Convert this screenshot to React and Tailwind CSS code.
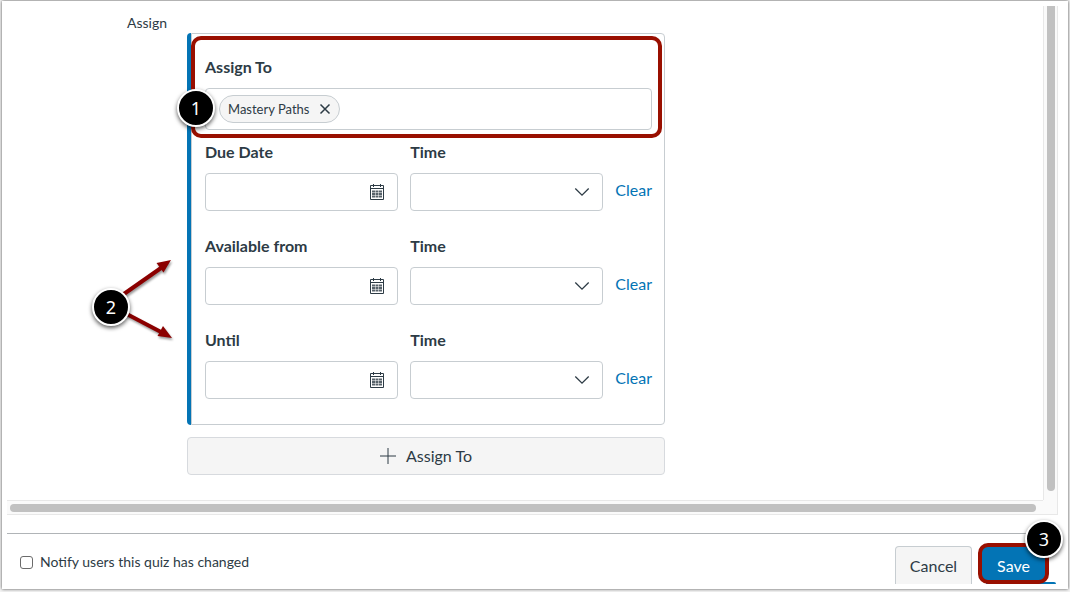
import { useState } from 'react'

const DATE_ROWS = [
  { id: 'due', label: 'Due Date' },
  { id: 'available', label: 'Available from' },
  { id: 'until', label: 'Until' },
]

function CalendarIcon() {
  return (
    <svg width="16" height="16" viewBox="0 0 16 16" fill="none" stroke="#2d3b45" aria-hidden="true">
      <path d="M1.5 1.500h13v14h-13z" />
      <path d="M2 4.500h12M4.500 0v3M11.500 0v3" />
      <path d="M3 7.500h3M6.500 7.500h3M10 7.500h3M3 10h3M6.500 10h3M10 10h3M3 12.500h3M6.500 12.500h3M10 12.500h3" strokeWidth="1.800" opacity=".8" />
    </svg>
  )
}

function ChevronIcon() {
  return (
    <svg
      width="16"
      height="16"
      viewBox="0 0 16 16"
      fill="none"
      stroke="#2d3b45"
      strokeWidth="1.3"
      className="pointer-events-none col-start-1 row-start-1 mr-3 self-center justify-self-end"
      aria-hidden="true"
    >
      <path d="M1.3 4.5 8 11.2l6.7-6.7" />
    </svg>
  )
}

function StepBadge({ number, className }) {
  return (
    <span
      className={`absolute z-10 flex size-[38px] items-center justify-center rounded-full border-2 border-white bg-black font-['Noto_Sans'] text-lg leading-6 text-white shadow-[0_2px_4px_rgba(0,0,0,0.65)] ${className}`}
    >
      {number}
    </span>
  )
}

function Arrows() {
  return (
    <svg
      width="64"
      height="96"
      viewBox="0 0 64 96"
      className="absolute top-[219px] -left-[72px] drop-shadow-[1px_2px_1px_rgba(0,0,0,0.4)]"
      aria-hidden="true"
    >
      <g stroke="#8b0000" strokeWidth="4" fill="none">
        <path d="M6 44 46 16" />
        <path d="M6 59 46 80" />
      </g>
      <path d="M56 8 48.5 20.5 41.5 11z" fill="#8b0000" />
      <path d="M57 86 42.5 84 48 74z" fill="#8b0000" />
    </svg>
  )
}

function DateRow({ id, label }) {
  const [date, setDate] = useState('')
  const [time, setTime] = useState('')

  return (
    <div className="mb-[23px] grid grid-cols-[minmax(0,1fr)_minmax(0,1fr)_auto] gap-x-3 last:mb-0">
      <label htmlFor={`${id}-date`} className="mb-[9px] font-bold">
        {label}
      </label>
      <label htmlFor={`${id}-time`} className="col-span-2 mb-[9px] font-bold">
        Time
      </label>
      <div className="flex h-[38px] items-center rounded border border-[#c7cdd1]">
        <input
          id={`${id}-date`}
          type="text"
          value={date}
          onChange={(e) => setDate(e.target.value)}
          className="h-full min-w-0 flex-1 px-3 outline-none"
        />
        <button type="button" className="mr-3 flex" aria-label={`Choose ${label}`}>
          <CalendarIcon />
        </button>
      </div>
      <div className="grid h-[38px] rounded border border-[#c7cdd1]">
        <select
          id={`${id}-time`}
          value={time}
          onChange={(e) => setTime(e.target.value)}
          className="col-start-1 row-start-1 appearance-none px-3 outline-none"
        >
          <option value=""></option>
        </select>
        <ChevronIcon />
      </div>
      <button
        type="button"
        className="mb-1 text-[#0374b5]"
        onClick={() => {
          setDate('')
          setTime('')
        }}
      >
        Clear
      </button>
    </div>
  )
}

function AssignCard() {
  return (
    <div className="relative flex">
      <div className="w-1 rounded-l bg-[#0374b5]" />
      <div className="flex-1 rounded-r border border-[#c7cdd1] pt-[21px] pr-3 pb-[25px] pl-[13px]">
        <label htmlFor="assign-to" className="mb-[9px] block font-bold">
          Assign To
        </label>
        <div className="mb-[10px] flex h-[42px] items-center rounded border border-[#c7cdd1] pl-[13px]">
          <button
            type="button"
            className="flex h-7 items-center gap-[10px] rounded-full border border-[#c7cdd1] bg-[#f5f5f5] px-2 text-[13px]"
          >
            Mastery Paths
            <svg width="12" height="12" viewBox="0 0 12 12" stroke="#2d3b45" strokeWidth="1.5" aria-hidden="true">
              <path d="M1.5 1.5l9 9M10.5 1.5l-9 9" />
            </svg>
          </button>
          <input id="assign-to" type="text" className="h-full min-w-0 flex-1 px-2 outline-none" />
        </div>
        {DATE_ROWS.map((row) => (
          <DateRow key={row.id} {...row} />
        ))}
      </div>

      <div className="pointer-events-none absolute top-[3px] right-[3px] left-[4px] h-[102px] rounded-[10px] border-4 border-[#990f00]" />
      <StepBadge number="1" className="top-[56px] -left-[10px]" />
      <Arrows />
      <StepBadge number="2" className="top-[255px] -left-[95px]" />
    </div>
  )
}

export default function App() {
  return (
    <div className="min-h-screen bg-[#f4f4f4] px-[2px] pt-px pb-[3px] font-[Lato,sans-serif] text-base leading-6 text-[#2d3b45]">
      <div className="bg-white px-[5px] pt-[5px] pb-[5px] shadow-[0_0_3px_rgba(0,0,0,0.7)]">
        <main className="mr-[5px] grid grid-cols-[1fr_15px]">
          <div className="flex gap-5 pt-[5px] pb-[25px]">
            <div className="w-[160px] shrink-0 text-right text-sm leading-6">Assign</div>
            <div className="w-full max-w-[478px] pt-[22px]">
              <AssignCard />
              <button
                type="button"
                className="mt-3 flex h-[38px] w-full items-center justify-center gap-[10px] rounded border border-[#d7dade] bg-[#f5f5f5]"
              >
                <svg width="16" height="16" viewBox="0 0 16 16" stroke="#2d3b45" strokeWidth="1" aria-hidden="true">
                  <path d="M8 0v16M0 8h16" />
                </svg>
                Assign To
              </button>
            </div>
          </div>
          <div className="flex justify-center border-x border-[#e8e8e8] bg-[#fafafa] pb-[9px]">
            <div className="w-2 rounded-b-full bg-[#c1c1c1]" />
          </div>
          <div className="flex h-[15px] items-center border-y border-[#e8e8e8] bg-[#fafafa] pr-[7px] pl-[3px]">
            <div className="h-2 w-full rounded-full bg-[#c1c1c1]" />
          </div>
          <div className="border-r border-b border-[#e8e8e8] bg-[#fafafa]" />
        </main>

        <footer className="mt-[18px] mr-[5px] flex h-[51px] justify-between border-t border-[#b0b4b7]">
          <label className="flex items-center gap-[7px] self-start pt-4 pl-[13px] text-sm leading-6">
            <input
              type="checkbox"
              className="size-[13px] appearance-none rounded-[3px] border border-[#6b6b6b] bg-white checked:bg-[#0374b5]"
            />
            Notify users this quiz has changed
          </label>
          <div className="relative flex h-[50px] items-end gap-[6px] pr-[9px]">
            <button
              type="button"
              className="h-[38px] w-[77px] rounded-t border border-b-0 border-[#c7cdd1] bg-[#f5f5f5]"
            >
              Cancel
            </button>
            <button
              type="submit"
              className="z-[1] h-[41px] w-[71px] rounded-[10px] border-4 border-[#990f00] bg-[#0374b5] pt-1 text-white"
            >
              Save
            </button>
            <div className="absolute right-[2px] bottom-0 h-[2px] w-[70px] rounded-tr-full bg-[#0374b5]" />
            <StepBadge number="3" className="top-[-14px] -right-[5px]" />
          </div>
        </footer>
      </div>
    </div>
  )
}
